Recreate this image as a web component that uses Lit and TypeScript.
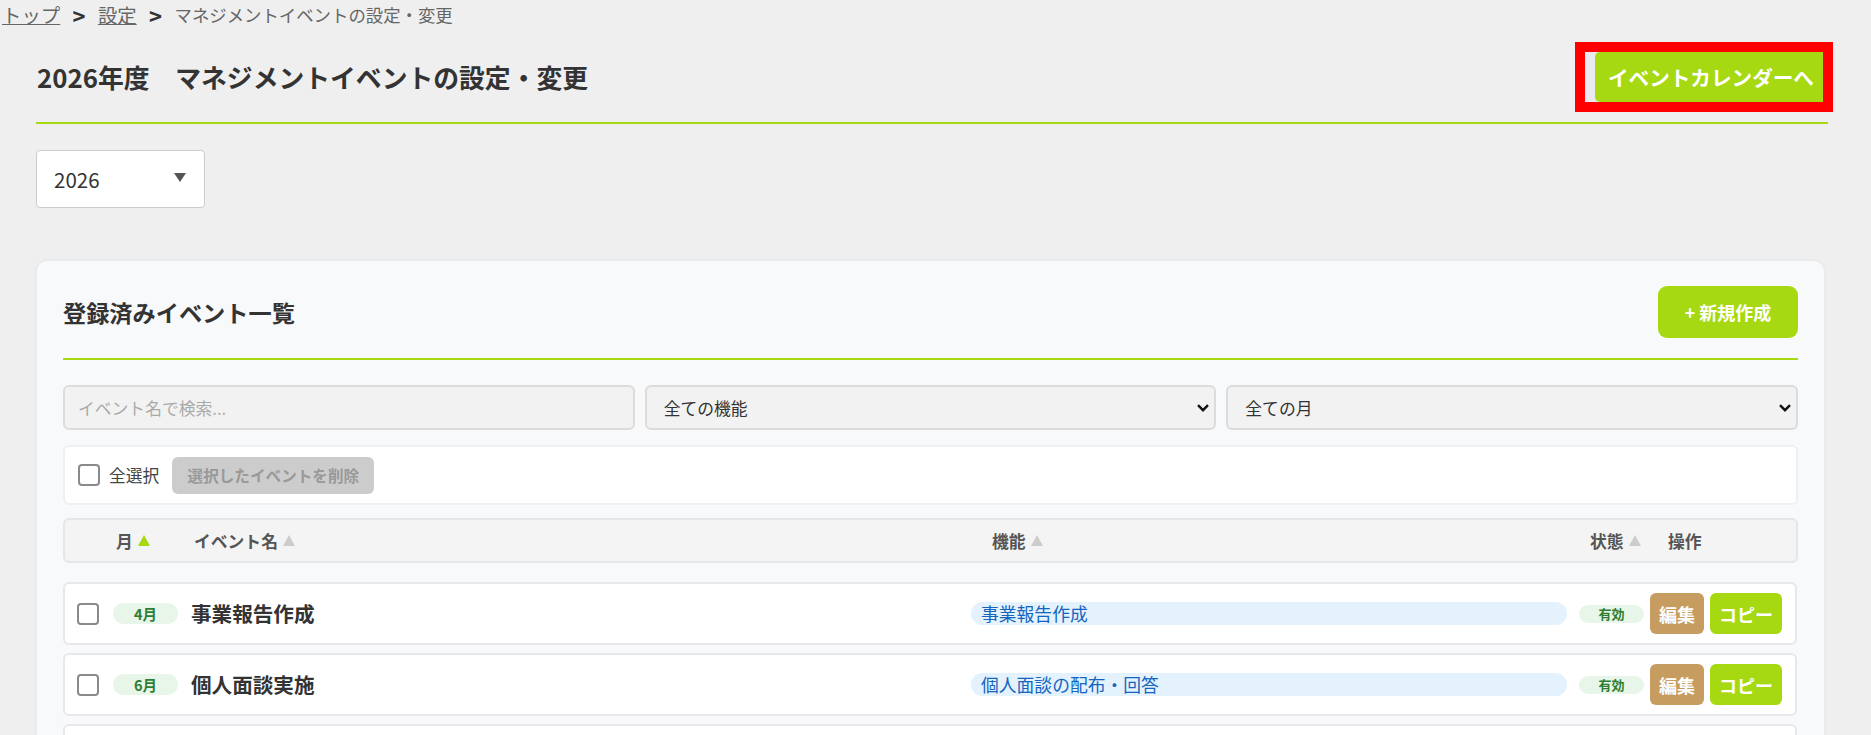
import { LitElement, html, css } from "lit";
import { customElement } from "lit/decorators.js";

interface EventRow {
  month: string;
  name: string;
  feature: string;
}

// only the first two rows are in view, the rest is just there so the list scrolls
const ROWS: EventRow[] = [
  { month: "4月", name: "事業報告作成", feature: "事業報告作成" },
  { month: "6月", name: "個人面談実施", feature: "個人面談の配布・回答" },
];

@customElement("app-root")
export class AppRoot extends LitElement {
  static styles = css`
    :host {
      display: block;
      height: 735px;
      overflow: hidden;
      background: #efefef;
      color: #333;
      font-family: "Noto Sans CJK JP", "Noto Sans", sans-serif;
    }

    * {
      box-sizing: border-box;
    }

    .crumbs {
      display: flex;
      align-items: center;
      gap: 12.4px;
      height: 30px;
      padding-left: 2px;
      font-size: 17.4px;
      line-height: 30px;
      color: #666;
    }

    .crumbs a {
      color: #666;
      font-size: 19.4px;
      text-decoration: underline;
    }

    .crumbs b {
      color: #333;
      font-size: 22px;
    }

    .page {
      padding: 12px 43px 0 36px;
    }

    .title-row {
      display: flex;
      justify-content: space-between;
      align-items: center;
    }

    h1 {
      margin: -2px 0 0 1px;
      font-size: 25.8px;
      font-weight: 700;
      color: #333;
    }

    .highlight {
      border: 10px solid #f00;
      background: #e9e9ef;
      padding-left: 10px;
      margin-right: -5px;
    }

    .calendar-btn {
      display: block;
      width: 228px;
      height: 50px;
      border: 0;
      border-radius: 5px 0 0 5px;
      background: #a6d911;
      color: #fff;
      font: 700 20.6px/50px "Noto Sans CJK JP", sans-serif;
      padding: 0 0 0 13px;
      text-align: left;
    }

    .title-line {
      height: 2px;
      margin-top: 10px;
      background: #a6d911;
    }

    .year {
      display: flex;
      align-items: center;
      justify-content: space-between;
      width: 169px;
      height: 58px;
      margin-top: 26px;
      padding: 0 18px 0 17px;
      background: #fff;
      border: 1px solid #ccc;
      border-radius: 4px;
      font-size: 20.5px;
    }

    .year i {
      width: 0;
      height: 0;
      margin-top: -3px;
      border-left: 6.5px solid transparent;
      border-right: 6.5px solid transparent;
      border-top: 9px solid #555;
    }

    .card {
      width: 1791px;
      margin: 51px 0 0 -1px;
      padding: 25px 26px 40px 26px;
      background: #f8f9fb;
      border: 2px solid #e9ebed;
      border-radius: 12px;
    }

    .card-head {
      display: flex;
      justify-content: space-between;
      align-items: center;
      padding-bottom: 20px;
      border-bottom: 2px solid #a6d911;
    }

    h2 {
      margin: 0;
      font-size: 23.2px;
      font-weight: 700;
      color: #333;
    }

    .new-btn {
      width: 140px;
      height: 52px;
      border: 0;
      border-radius: 9px;
      background: #a6d911;
      color: #fff;
      font: 700 18px "Noto Sans CJK JP", sans-serif;
    }

    .filters {
      display: grid;
      grid-template-columns: repeat(3, 1fr);
      gap: 10px;
      margin-top: 25px;
    }

    .filters input,
    .filters select {
      height: 45px;
      width: 100%;
      padding: 0 13px;
      background-color: #f2f2f2;
      border: 2px solid #dcdcdc;
      border-radius: 6px;
      color: #333;
      font: 16.8px "Noto Sans CJK JP", sans-serif;
    }

    .filters select {
      appearance: none;
      padding-left: 17px;
      background-image: url("data:image/svg+xml,%3Csvg xmlns='http://www.w3.org/2000/svg' width='12' height='8' viewBox='0 0 12 8'%3E%3Cpath d='M1 1.2l5 5 5-5' fill='none' stroke='%23111' stroke-width='2.4'/%3E%3C/svg%3E");
      background-repeat: no-repeat;
      background-position: right 5px center;
    }

    .filters input::placeholder {
      color: #aaa;
      opacity: 1;
    }

    .bulk {
      display: flex;
      align-items: center;
      height: 60px;
      margin-top: 15px;
      padding: 0 13px;
      background: #fff;
      border: 2px solid #eef0f2;
      border-radius: 6px;
      font-size: 16.8px;
      color: #444;
    }

    .check {
      flex: none;
      width: 22px;
      height: 22px;
      border: 2px solid #8a8a8a;
      border-radius: 4px;
      background: #fff;
    }

    .bulk span {
      margin-left: 9px;
    }

    .delete-btn {
      height: 37px;
      width: 202px;
      margin-left: 13px;
      border: 0;
      border-radius: 6px;
      background: #ccc;
      color: #999;
      font: 700 15.6px "Noto Sans CJK JP", sans-serif;
    }

    .thead {
      display: grid;
      grid-template-columns: 78px 798px 598px 78px auto;
      align-items: center;
      height: 45px;
      margin-top: 13px;
      padding-left: 51px;
      background: #f4f4f4;
      border: 2px solid #e6e6e6;
      border-radius: 6px;
      font-size: 16.8px;
      font-weight: 700;
      color: #555;
    }

    .thead u {
      display: inline-block;
      width: 0;
      height: 0;
      margin-left: 5px;
      vertical-align: 2px;
      border-left: 6.5px solid transparent;
      border-right: 6.5px solid transparent;
      border-bottom: 11px solid #ccc;
    }

    .thead u.on {
      border-bottom-color: #a6d911;
    }

    .list {
      display: flex;
      flex-direction: column;
      gap: 8px;
      height: 400px;
      margin-top: 19px;
      overflow-y: scroll;
    }

    .list::-webkit-scrollbar {
      width: 11px;
    }

    .list::-webkit-scrollbar-thumb {
      background: #bbb;
      border-radius: 5px;
    }

    .row {
      flex: none;
      display: flex;
      align-items: center;
      height: 63px;
      padding: 0 1px 0 12px;
      background: #fff;
      border: 2px solid #e8e8ea;
      border-radius: 6px;
      margin-right: 1px;
    }

    .month {
      flex: none;
      width: 65px;
      height: 21px;
      margin-left: 14px;
      background: #e8f5e9;
      border-radius: 11px;
      color: #2e7d32;
      font-size: 14.5px;
      font-weight: 700;
      line-height: 21px;
      text-align: center;
    }

    .name {
      flex: none;
      width: 780px;
      margin: -2px 0 0 13px;
      font-size: 20.6px;
      font-weight: 700;
      color: #333;
    }

    .feature {
      flex: none;
      width: 596px;
      height: 23px;
      padding-left: 10px;
      background: #e3f2fd;
      border-radius: 12px;
      color: #1565c0;
      font-size: 17.8px;
      line-height: 23px;
    }

    .status {
      flex: none;
      width: 65px;
      height: 18px;
      margin-left: 12px;
      background: #e8f5e9;
      border-radius: 9px;
      color: #2e7d32;
      font-size: 13px;
      font-weight: 700;
      line-height: 18px;
      text-align: center;
    }

    .row button {
      flex: none;
      height: 41px;
      border: 0;
      border-radius: 6px;
      color: #fff;
      padding: 0;
      font: 700 18px "Noto Sans CJK JP", sans-serif;
    }

    .edit {
      width: 54px;
      margin-left: 6px;
      background: #c69c60;
    }

    .copy {
      width: 72px;
      margin-left: 6px;
      background: #a6d911;
    }
  `;

  renderRow(row: EventRow) {
    return html`
      <div class="row">
        <div class="check"></div>
        <div class="month">${row.month}</div>
        <div class="name">${row.name}</div>
        <div class="feature">${row.feature}</div>
        <div class="status">有効</div>
        <button class="edit">編集</button>
        <button class="copy">コピー</button>
      </div>
    `;
  }

  render() {
    return html`
      <nav class="crumbs">
        <a>トップ</a><b>&gt;</b><a>設定</a><b>&gt;</b>
        <span>マネジメントイベントの設定・変更</span>
      </nav>
      <div class="page">
        <div class="title-row">
          <h1>2026年度　マネジメントイベントの設定・変更</h1>
          <div class="highlight">
            <button class="calendar-btn">イベントカレンダーへ</button>
          </div>
        </div>
        <div class="title-line"></div>
        <div class="year"><span>2026</span><i></i></div>

        <section class="card">
          <div class="card-head">
            <h2>登録済みイベント一覧</h2>
            <button class="new-btn">+ 新規作成</button>
          </div>
          <div class="filters">
            <input placeholder="イベント名で検索..." />
            <select><option>全ての機能</option></select>
            <select><option>全ての月</option></select>
          </div>
          <div class="bulk">
            <div class="check"></div>
            <span>全選択</span>
            <button class="delete-btn">選択したイベントを削除</button>
          </div>
          <div class="thead">
            <div>月<u class="on"></u></div>
            <div>イベント名<u></u></div>
            <div>機能<u></u></div>
            <div>状態<u></u></div>
            <div>操作</div>
          </div>
          <div class="list">
            ${ROWS.map((r) => this.renderRow(r))}
            <div class="row"></div>
            <div class="row"></div>
            <div class="row"></div>
            <div class="row"></div>
            <div class="row"></div>
          </div>
        </section>
      </div>
    `;
  }
}
